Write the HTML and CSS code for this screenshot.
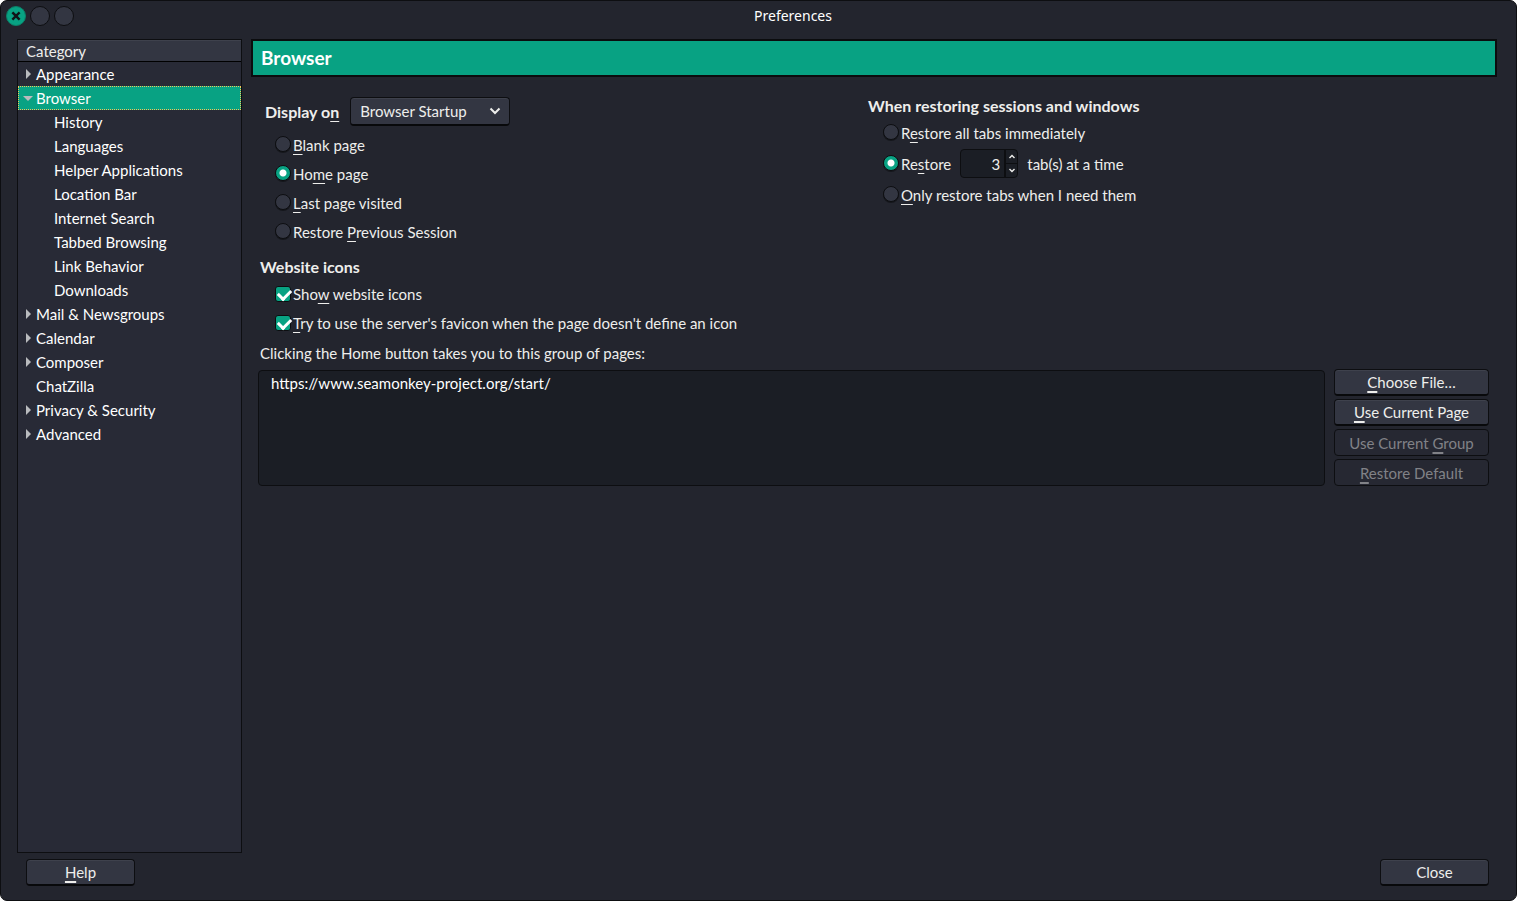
FILE: index.html
```html
<!DOCTYPE html>
<html lang="en">
<head>
<meta charset="utf-8">
<title>Preferences</title>
<link rel="stylesheet" href="styles.css">
</head>
<body>
<div class="window">
  <header class="titlebar">
    <div class="window-controls">
      <button type="button" class="window-button window-close" aria-label="Close window"><svg viewBox="0 0 18 18" aria-hidden="true"><path d="M6.200 6.200l5.600 5.600M11.800 6.200l-5.600 5.600" fill="none" stroke="#101418" stroke-width="2.400" stroke-linecap="square"/></svg></button>
      <button type="button" class="window-button" aria-label="Minimize"></button>
      <button type="button" class="window-button" aria-label="Maximize"></button>
    </div>
    <h1 class="window-title">Preferences</h1>
  </header>
  <div class="body">
    <nav class="sidebar" aria-label="Category">
      <div class="tree-header">Category</div>
      <ul class="tree">
        <li><button type="button" class="row"><span class="twisty closed"></span>Appearance</button></li>
        <li><button type="button" class="row selected"><span class="twisty open"></span>Browser</button>
          <ul class="tree nested">
            <li><button type="button" class="row">History</button></li>
            <li><button type="button" class="row">Languages</button></li>
            <li><button type="button" class="row">Helper Applications</button></li>
            <li><button type="button" class="row">Location Bar</button></li>
            <li><button type="button" class="row">Internet Search</button></li>
            <li><button type="button" class="row">Tabbed Browsing</button></li>
            <li><button type="button" class="row">Link Behavior</button></li>
            <li><button type="button" class="row">Downloads</button></li>
          </ul>
        </li>
        <li><button type="button" class="row"><span class="twisty closed"></span>Mail &amp; Newsgroups</button></li>
        <li><button type="button" class="row"><span class="twisty closed"></span>Calendar</button></li>
        <li><button type="button" class="row"><span class="twisty closed"></span>Composer</button></li>
        <li><button type="button" class="row"><span class="twisty"></span>ChatZilla</button></li>
        <li><button type="button" class="row"><span class="twisty closed"></span>Privacy &amp; Security</button></li>
        <li><button type="button" class="row"><span class="twisty closed"></span>Advanced</button></li>
      </ul>
    </nav>
    <main class="pane">
      <h2 class="banner">Browser</h2>
      <div class="columns">
        <section class="startup">
          <div class="display-row">
            <label class="heading" for="display-on">Display o<u>n</u></label>
            <div class="select-wrap">
              <select id="display-on" class="select"><option>Browser Startup</option></select>
              <svg class="chevron" viewBox="0 0 12 8" aria-hidden="true"><path d="M1.500 1.500L6 6l4.500-4.500" fill="none" stroke="#eeeeec" stroke-width="2"/></svg>
            </div>
          </div>
          <label class="choice"><input type="radio" class="radio" name="startup"><span><u>B</u>lank page</span></label>
          <label class="choice"><input type="radio" class="radio" name="startup" checked><span>Ho<u>m</u>e page</span></label>
          <label class="choice"><input type="radio" class="radio" name="startup"><span><u>L</u>ast page visited</span></label>
          <label class="choice"><input type="radio" class="radio" name="startup"><span>Restore <u>P</u>revious Session</span></label>
        </section>
        <section class="restoring">
          <h3 class="heading">When restoring sessions and windows</h3>
          <label class="choice"><input type="radio" class="radio" name="restore"><span>R<u>e</u>store all tabs immediately</span></label>
          <div class="restore-row">
            <label class="choice"><input type="radio" class="radio" name="restore" checked><span>Re<u>s</u>tore</span></label>
            <div class="spinner">
              <input id="tab-count" class="spinner-input" type="text" inputmode="numeric" value="3">
              <div class="spinner-buttons">
                <button type="button" class="spin" aria-label="Increase"><svg viewBox="0 0 8 5" aria-hidden="true"><path d="M1.500 4L4 1.500 6.500 4" fill="none" stroke="#eeeeec" stroke-width="1.400"/></svg></button>
                <button type="button" class="spin" aria-label="Decrease"><svg viewBox="0 0 8 5" aria-hidden="true"><path d="M1.500 1L4 3.500 6.500 1" fill="none" stroke="#eeeeec" stroke-width="1.400"/></svg></button>
              </div>
            </div>
            <label for="tab-count">tab(s) at a time</label>
          </div>
          <label class="choice"><input type="radio" class="radio" name="restore"><span><u>O</u>nly restore tabs when I need them</span></label>
        </section>
      </div>
      <section class="icons">
        <h3 class="heading">Website icons</h3>
        <label class="choice"><input type="checkbox" class="check" checked><span>Sho<u>w</u> website icons</span></label>
        <label class="choice"><input type="checkbox" class="check" checked><span><u>T</u>ry to use the server's favicon when the page doesn't define an icon</span></label>
      </section>
      <section class="home">
        <label class="home-label" for="home-pages">Clicking the Home button takes you to this group of pages:</label>
        <div class="home-row">
          <textarea id="home-pages" class="home-list" readonly>https://www.seamonkey-project.org/start/</textarea>
          <div class="home-buttons">
            <button type="button" class="button"><u>C</u>hoose File…</button>
            <button type="button" class="button"><u>U</u>se Current Page</button>
            <button type="button" class="button" disabled>Use Current <u>G</u>roup</button>
            <button type="button" class="button" disabled><u>R</u>estore Default</button>
          </div>
        </div>
      </section>
    </main>
  </div>
  <footer class="footer">
    <button type="button" class="button dialog-button"><u>H</u>elp</button>
    <button type="button" class="button dialog-button">Close</button>
  </footer>
</div>
</body>
</html>
```
FILE: styles.css
```css
* {
  box-sizing: border-box;
}

body {
  margin: 0;
  background: #fff;
  color: #eeeeec;
  font: 15px/24px Lato, sans-serif;
}

h1, h2, h3, ul {
  margin: 0;
  padding: 0;
}

button, input, select, textarea {
  margin: 0;
  color: inherit;
  font: inherit;
}

u {
  text-decoration: underline 1px;
  text-underline-offset: 3px;
  text-decoration-skip-ink: none;
}

.window {
  display: flex;
  flex-direction: column;
  min-height: 100vh;
  border: 1px solid #0d0e11;
  border-radius: 7px;
  background: #23252e;
}

.titlebar {
  display: flex;
  align-items: center;
  height: 30px;
  padding: 0 4px 0 5px;
}

.window-controls {
  display: flex;
  gap: 4px;
}

.window-button {
  width: 20px;
  height: 20px;
  padding: 0;
  border: 1px solid #0d0e11;
  border-radius: 50%;
  background: #333642;
}

.window-close {
  border: 1px solid #0b8068;
  background: #08a283;
}

.window-close svg {
  display: block;
}

.window-title {
  flex: 1;
  color: #fff;
  font: 14px/20px "Noto Sans", sans-serif;
  text-align: center;
}

.body {
  display: flex;
  flex: 1;
  gap: 9px;
  padding: 8px 19px 0 16px;
}

.sidebar {
  flex: 0 0 225px;
  border: 1px solid #0d0e11;
  background: #282a36;
  color: #fff;
}

.tree-header {
  height: 22px;
  padding-left: 8px;
  border-top: 1px solid #3e414c;
  border-bottom: 1px solid #000;
  background: #333642;
  color: #eeeeec;
  line-height: 20px;
}

.tree {
  list-style: none;
}

.row {
  display: flex;
  align-items: center;
  width: 100%;
  height: 24px;
  padding: 0 0 0 4px;
  border: 1px solid transparent;
  background: none;
  line-height: 22px;
}

.nested .row {
  padding-left: 35px;
}

.selected {
  border: 1px dotted #f2c75c;
  background: #08a283;
}

.twisty {
  display: flex;
  justify-content: center;
  width: 10px;
  margin-right: 3px;
}

.closed::before {
  content: "";
  border: 5px solid transparent;
  border-right: 0;
  border-left-color: #b9bbbe;
}

.open::before {
  content: "";
  border: 5px solid transparent;
  border-bottom: 0;
  border-top-color: #b9bbbe;
}

.pane {
  flex: 1;
  min-width: 0;
}

.banner {
  height: 38px;
  padding-left: 8px;
  border: 2px solid #0b0c0e;
  background: #08a283;
  color: #fff;
  font-size: 19px;
  line-height: 34px;
}

.columns {
  display: grid;
  grid-template-columns: 1fr 1fr;
  padding: 20px 12px 0 0;
}

.heading {
  font-size: 16px;
  font-weight: bold;
  line-height: 20px;
}

.display-row {
  display: flex;
  align-items: center;
  gap: 11px;
  padding-left: 14px;
  margin-bottom: 4px;
}

.select-wrap {
  position: relative;
}

.select {
  display: block;
  width: 160px;
  height: 29px;
  padding: 0 9px;
  border: 1px solid #0d0e11;
  border-bottom: 2px solid #08090b;
  border-radius: 4px;
  background: #333642;
  box-shadow: inset 0 1px #3e414c;
  appearance: none;
}

.chevron {
  position: absolute;
  top: 10px;
  right: 9px;
  width: 12px;
  height: 8px;
  pointer-events: none;
}

.choice {
  display: flex;
  align-items: center;
  gap: 2px;
  height: 29px;
  padding-left: 24px;
}

.radio, .check {
  flex: none;
  width: 16px;
  height: 16px;
  appearance: none;
}

.radio {
  margin-bottom: 2px;
  border: 1px solid #0d0e11;
  border-radius: 50%;
  background: #333642;
  box-shadow: 0 1px #15171c;
}

.radio:checked {
  background: radial-gradient(circle, #fff 3px, #08a283 4px);
}

.check {
  border: 1px solid #0d0e11;
  border-radius: 3px;
  background: #08a283;
}

.check::before {
  content: "";
  display: block;
  width: 10px;
  height: 6px;
  margin: 2px;
  border: solid #fff;
  border-width: 0 0 3px 3px;
  transform: rotate(-45deg);
}

.restoring .choice {
  padding-left: 15px;
}

.restoring .heading {
  height: 21px;
  line-height: 18px;
}

.restore-row {
  display: flex;
  align-items: center;
  gap: 9px;
  padding: 2px 0;
}

.spinner {
  display: flex;
  width: 58px;
  height: 29px;
  border: 1px solid #0d0e11;
  border-radius: 4px;
  background: #1b1e25;
}

.spinner-input {
  flex: 1;
  min-width: 0;
  padding: 0 4px;
  border: 0;
  background: none;
  text-align: right;
}

.spinner-buttons {
  display: grid;
  width: 13px;
  border-left: 2px solid #0d0e11;
}

.spin {
  display: grid;
  place-items: center;
  padding: 0;
  border: 0;
  background: none;
}

.spin + .spin {
  border-top: 1px solid #0d0e11;
}

.spin svg {
  width: 8px;
  height: 5px;
}

.icons {
  padding-top: 11px;
}

.icons .heading {
  height: 22px;
  padding-left: 9px;
}

.home-label {
  display: block;
  padding: 4px 0 4px 9px;
}

.home-row {
  display: flex;
  gap: 9px;
  padding: 0 8px 0 7px;
}

.home-list {
  flex: 1;
  min-width: 0;
  margin-top: 1px;
  padding: 0 12px;
  border: 1px solid #0d0e11;
  border-radius: 4px;
  background: #1b1e25;
  color: #fff;
  resize: none;
}

.home-buttons {
  display: grid;
  flex: 0 0 155px;
  gap: 3px;
}

.button {
  height: 27px;
  padding: 0;
  border: 1px solid #0d0e11;
  border-bottom: 2px solid #08090b;
  border-radius: 4px;
  background: #333642;
  box-shadow: inset 0 1px #3e414c;
  line-height: 22px;
}

.button u {
  text-decoration-thickness: 2px;
}

.button:disabled {
  border-bottom: 1px solid #0d0e11;
  background: #262832;
  box-shadow: none;
  color: #818287;
}

.footer {
  display: flex;
  justify-content: space-between;
  padding: 6px 27px 14px 25px;
}

.dialog-button {
  width: 109px;
}
```
